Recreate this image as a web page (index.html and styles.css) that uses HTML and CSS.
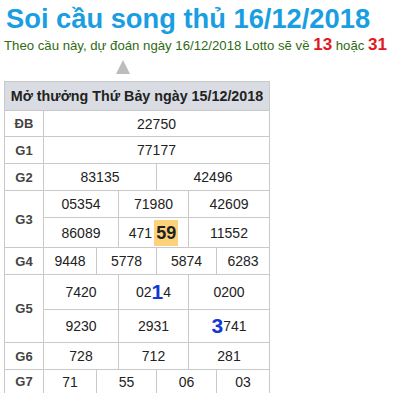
FILE: index.html
```html
<!DOCTYPE html>
<html lang="vi">
<head>
<meta charset="utf-8">
<link rel="stylesheet" href="styles.css">
</head>
<body>
<div class="page">
  <h1 class="title">Soi cầu song thủ 16/12/2018</h1>
  <p class="sub">Theo cầu này, dự đoán ngày 16/12/2018 Lotto sẽ về <b class="red">13</b> hoặc <b class="red">31</b></p>
  <div class="arrow-row"><span class="arrow"></span></div>
  <div class="kq">
    <div class="head span-all">Mở thưởng Thứ Bảy ngày 15/12/2018</div>

    <div class="lbl">ĐB</div>
    <div class="num c-all">22750</div>

    <div class="lbl">G1</div>
    <div class="num c-all">77177</div>

    <div class="lbl">G2</div>
    <div class="num c2a">83135</div>
    <div class="num c2b">42496</div>

    <div class="lbl rows2">G3</div>
    <div class="num c3a">05354</div>
    <div class="num c3b">71980</div>
    <div class="num c3c">42609</div>
    <div class="num c3a">86089</div>
    <div class="num c3b">471<span class="hl">59</span></div>
    <div class="num c3c">11552</div>

    <div class="lbl">G4</div>
    <div class="num c4a">9448</div>
    <div class="num c4b">5778</div>
    <div class="num c4c">5874</div>
    <div class="num c4d">6283</div>

    <div class="lbl rows2">G5</div>
    <div class="num c3a">7420</div>
    <div class="num c3b">02<span class="big">1</span>4</div>
    <div class="num c3c">0200</div>
    <div class="num c3a">9230</div>
    <div class="num c3b">2931</div>
    <div class="num c3c"><span class="big">3</span>741</div>

    <div class="lbl">G6</div>
    <div class="num c3a">728</div>
    <div class="num c3b">712</div>
    <div class="num c3c">281</div>

    <div class="lbl">G7</div>
    <div class="num c4a">71</div>
    <div class="num c4b">55</div>
    <div class="num c4c">06</div>
    <div class="num c4d">03</div>
  </div>
</div>
</body>
</html>
```

FILE: styles.css
```css
html, body {
  margin: 0;
  padding: 0;
  background: #fff;
}
body {
  font-family: "Liberation Sans", Arial, sans-serif;
  color: #222;
}
.page {
  padding: 3px 4px 0 4px;
}
.title {
  margin: 0 0 0 2px;
  font-size: 27.3px;
  line-height: 32px;
  font-weight: bold;
  color: #1a9ee2;
}
.sub {
  margin: 0;
  font-size: 13.2px;
  line-height: 20px;
  color: #2e6b12;
}
.red {
  color: #e0191c;
  font-size: 17px;
}
.arrow-row {
  height: 25px;
  display: flex;
  align-items: flex-start;
  padding-left: 112px;
  padding-top: 4px;
  box-sizing: border-box;
}
.arrow {
  width: 0;
  height: 0;
  border-left: 7px solid transparent;
  border-right: 7px solid transparent;
  border-bottom: 14px solid #bdbdbd;
}
.kq {
  display: grid;
  width: max-content;
  grid-template-columns: 38px 52px 21px 37px 31px 27px 52px;
  grid-template-rows: 28px 25px 26px 26px 26px 29px 26px 34px 32px 26px 23px;
  gap: 1px;
  padding: 1px 1px 0 1px;
  background: #c9c9c9;
}
.kq > div {
  background: #fff;
  display: flex;
  align-items: center;
  justify-content: center;
}
.kq > .head {
  background: #d9dde3;
  font-weight: bold;
  font-size: 14.3px;
  color: #222;
}
.span-all { grid-column: 1 / -1; }
.lbl {
  grid-column: 1;
  font-weight: bold;
  font-size: 13px;
  color: #444;
}
.rows2 { grid-row: span 2; }
.num {
  font-size: 14px;
  color: #222;
}
.c-all { grid-column: 2 / 8; }
.c2a { grid-column: 2 / 5; }
.c2b { grid-column: 5 / 8; }
.c3a { grid-column: 2 / 4; }
.c3b { grid-column: 4 / 6; }
.c3c { grid-column: 6 / 8; }
.c4a { grid-column: 2 / 3; }
.c4b { grid-column: 3 / 5; }
.c4c { grid-column: 5 / 7; }
.c4d { grid-column: 7 / 8; }
.hl {
  background: #fdd27b;
  font-weight: bold;
  font-size: 18px;
  padding: 3px 2px 2px;
  margin-left: 2px;
}
.big {
  color: #1238d6;
  font-weight: bold;
  font-size: 21px;
}
```
